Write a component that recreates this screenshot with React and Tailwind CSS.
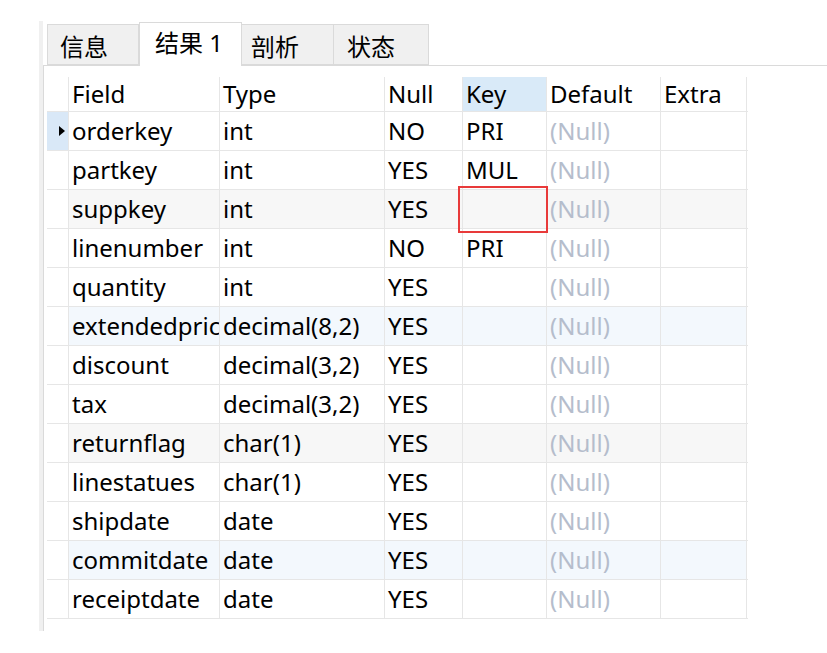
import React from "react";

const rows = [
  { field: "orderkey", type: "int", nul: "NO", key: "PRI" },
  { field: "partkey", type: "int", nul: "YES", key: "MUL" },
  { field: "suppkey", type: "int", nul: "YES", key: "", bg: "bg-[#f7f7f7]" },
  { field: "linenumber", type: "int", nul: "NO", key: "PRI" },
  { field: "quantity", type: "int", nul: "YES", key: "" },
  { field: "extendedprice", type: "decimal(8,2)", nul: "YES", key: "", bg: "bg-[#f3f8fd]" },
  { field: "discount", type: "decimal(3,2)", nul: "YES", key: "" },
  { field: "tax", type: "decimal(3,2)", nul: "YES", key: "" },
  { field: "returnflag", type: "char(1)", nul: "YES", key: "", bg: "bg-[#f7f7f7]" },
  { field: "linestatues", type: "char(1)", nul: "YES", key: "" },
  { field: "shipdate", type: "date", nul: "YES", key: "" },
  { field: "commitdate", type: "date", nul: "YES", key: "", bg: "bg-[#f3f8fd]" },
  { field: "receiptdate", type: "date", nul: "YES", key: "" },
];

const tabs = [
  { label: "信息", w: "w-[92px]", pl: "pl-[12px]" },
  { label: "结果 1", w: "w-[103px]", pl: "pl-[15px]", active: true },
  { label: "剖析", w: "w-[93px]", pl: "pl-[9px]" },
  { label: "状态", w: "w-[96px]", pl: "pl-[13px]" },
];

function Cell({ w, className = "", children }) {
  return (
    <div
      className={`${w} h-full shrink-0 flex items-center pl-[3px] border-l border-[#e6e6e6] overflow-hidden whitespace-nowrap ${className}`}
    >
      {children}
    </div>
  );
}

export default function App() {
  return (
    <div
      className="relative w-[827px] h-[653px] bg-white text-black text-[24px] leading-none"
      style={{ fontFamily: '"Noto Sans", "Noto Sans CJK SC", sans-serif' }}
    >
      <div className="flex pt-[21px] pl-[39px]">
        {/* left gutter */}
        <div className="w-[4px] h-[610px] bg-[#f0f0f0]" />

        <div className="flex-1 flex flex-col">
          {/* Tabs */}
          <div className="flex items-end h-[44px] pl-[4px]">
            {tabs.map((t) =>
              t.active ? (
                <div
                  key={t.label}
                  className={`${t.w} ${t.pl} h-[44px] -mb-px pt-[8px] bg-white border border-b-0 border-[#dadada] relative z-10`}
                >
                  {t.label}
                </div>
              ) : (
                <div
                  key={t.label}
                  className={`${t.w} ${t.pl} h-[41px] pt-[10px] bg-[#f0f0f0] border border-[#dadada] -ml-px first:ml-0`}
                >
                  {t.label}
                </div>
              )
            )}
          </div>

          {/* Panel */}
          <div className="flex-1 border-t border-l border-[#dadada] pt-[11px] pl-[3px]">
            {/* Header row */}
            <div className="flex h-[35px] border-b border-[#e6e6e6] w-[701px]">
              <div className="w-[21px] shrink-0" />
              <Cell w="w-[151px]">Field</Cell>
              <Cell w="w-[165px]">Type</Cell>
              <Cell w="w-[78px]">Null</Cell>
              <Cell w="w-[84px]" className="bg-[#d9eaf8]">Key</Cell>
              <Cell w="w-[114px]">Default</Cell>
              <Cell w="w-[87px]" className="border-r">Extra</Cell>
            </div>

            {rows.map((r, i) => (
              <div
                key={r.field}
                className="flex h-[39px] border-b border-[#e6e6e6] w-[701px]"
              >
                <div
                  className={`w-[21px] shrink-0 h-full flex items-center pl-[12px] ${
                    i === 0 ? "bg-[#d9e8f7]" : ""
                  }`}
                >
                  {i === 0 && (
                    <svg width="6" height="10" viewBox="0 0 6 10">
                      <path d="M0 0 L6 5 L0 10 Z" fill="#000" />
                    </svg>
                  )}
                </div>
                <div className={`flex h-full ${r.bg || ""}`}>
                  <Cell w="w-[151px]">{r.field}</Cell>
                  <Cell w="w-[165px]">{r.type}</Cell>
                  <Cell w="w-[78px]">{r.nul}</Cell>
                  <Cell w="w-[84px]">{r.key}</Cell>
                  <Cell w="w-[114px]" className="text-[#b5bdcc]">
                    (Null)
                  </Cell>
                  <Cell w="w-[87px]" className="border-r" />
                </div>
              </div>
            ))}
          </div>
        </div>
      </div>

      {/* highlight box */}
      <div className="absolute left-[458px] top-[186px] w-[90px] h-[47px] border-2 border-[#e83a3a]" />
    </div>
  );
}
